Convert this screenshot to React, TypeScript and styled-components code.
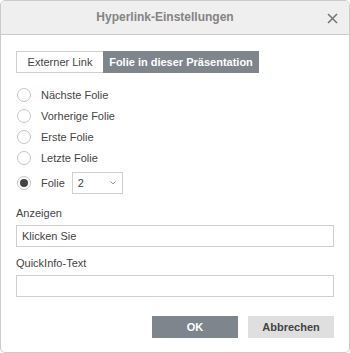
import React from "react";
import styled, { createGlobalStyle } from "styled-components";

const Global = createGlobalStyle`
  html, body { margin: 0; padding: 0; background: #fff; }
  body { font-family: "Liberation Sans", Arial, sans-serif; }
  * { box-sizing: border-box; }
`;

const Dialog = styled.div`
  width: 350px;
  height: 353px;
  border: 1px solid #cbcbcb;
  border-radius: 5px;
  overflow: hidden;
  background: #fff;
  display: flex;
  flex-direction: column;
`;

const Header = styled.div`
  position: relative;
  height: 34px;
  flex: none;
  background: #efefef;
  border-bottom: 1px solid #cbcbcb;
  display: flex;
  align-items: center;
  justify-content: center;
  padding-right: 20px;
  padding-bottom: 1px;
`;

const Title = styled.span`
  font-size: 12px;
  font-weight: bold;
  color: #848484;
`;

const Close = styled.button`
  position: absolute;
  right: 11px;
  top: 11px;
  width: 12px;
  height: 12px;
  padding: 0;
  border: none;
  background: transparent;
  display: flex;
  align-items: center;
  justify-content: center;
  cursor: pointer;
`;

const Body = styled.div`
  padding: 16px 15px 15px 15px;
  display: flex;
  flex-direction: column;
  font-size: 11px;
  color: #444;
`;

const Tabs = styled.div`
  display: flex;
  height: 22px;
`;

const Tab = styled.div<{ $active?: boolean; $w: number }>`
  width: ${(p) => p.$w}px;
  height: 22px;
  display: flex;
  align-items: center;
  justify-content: center;
  font-size: 11px;
  font-weight: ${(p) => (p.$active ? "bold" : "normal")};
  color: ${(p) => (p.$active ? "#fff" : "#444")};
  background: ${(p) => (p.$active ? "#7e858c" : "#fff")};
  border: 1px solid ${(p) => (p.$active ? "#7e858c" : "#cfcfcf")};
  border-right: ${(p) => (p.$active ? "1px solid #7e858c" : "none")};
`;

const RadioList = styled.div`
  display: flex;
  flex-direction: column;
  margin-top: 11px;
`;

const RadioRow = styled.label<{ $tall?: boolean }>`
  display: flex;
  align-items: center;
  height: ${(p) => (p.$tall ? "22px" : "21px")};
  margin-top: ${(p) => (p.$tall ? "4px" : "0")};
  padding-left: 1px;
`;

const Circle = styled.span<{ $checked?: boolean }>`
  width: 14px;
  height: 14px;
  border-radius: 50%;
  border: 1px solid #c4c4c4;
  display: flex;
  align-items: center;
  justify-content: center;
  margin-right: 10px;
  &::after {
    content: "";
    display: ${(p) => (p.$checked ? "block" : "none")};
    width: 8px;
    height: 8px;
    border-radius: 50%;
    background: #444;
  }
`;

const Select = styled.div`
  margin-left: 7px;
  width: 51px;
  height: 22px;
  border: 1px solid #cfcfcf;
  display: flex;
  align-items: center;
  justify-content: space-between;
  padding: 0 6px 0 5px;
  font-size: 11px;
  color: #444;
`;

const FieldLabel = styled.div<{ $top: number }>`
  margin-top: ${(p) => p.$top}px;
  height: 14px;
  line-height: 14px;
  margin-bottom: 5px;
  font-size: 11px;
  color: #444;
`;

const Input = styled.div`
  width: 318px;
  height: 22px;
  border: 1px solid #cfcfcf;
  display: flex;
  align-items: center;
  padding: 0 5px;
  font-size: 11px;
  color: #444;
`;

const Footer = styled.div`
  display: flex;
  justify-content: flex-end;
  gap: 10px;
  margin-top: 19px;
`;

const Button = styled.button<{ $primary?: boolean }>`
  width: 86px;
  height: 22px;
  border: none;
  padding: 0;
  font-family: "Liberation Sans", Arial, sans-serif;
  font-size: 11px;
  font-weight: bold;
  color: ${(p) => (p.$primary ? "#fff" : "#444")};
  background: ${(p) => (p.$primary ? "#7e858c" : "#dfdfdf")};
`;

const Radio = ({ label, checked }: { label: string; checked?: boolean }) => (
  <RadioRow>
    <Circle $checked={checked} />
    {label}
  </RadioRow>
);

export default function App() {
  return (
    <>
      <Global />
      <Dialog>
        <Header>
          <Title>Hyperlink-Einstellungen</Title>
          <Close aria-label="Schließen">
            <svg width="11" height="11" viewBox="0 0 11 11">
              <path d="M1 1 L10 10 M10 1 L1 10" stroke="#777" strokeWidth="1.6" fill="none" />
            </svg>
          </Close>
        </Header>
        <Body>
          <Tabs>
            <Tab $w={87}>Externer Link</Tab>
            <Tab $w={156} $active>
              Folie in dieser Präsentation
            </Tab>
          </Tabs>
          <RadioList>
            <Radio label="Nächste Folie" />
            <Radio label="Vorherige Folie" />
            <Radio label="Erste Folie" />
            <Radio label="Letzte Folie" />
            <RadioRow $tall>
              <Circle $checked />
              Folie
              <Select>
                <span>2</span>
                <svg width="6" height="4" viewBox="0 0 6 4">
                  <path d="M0.5 0.5 L3 3 L5.5 0.5" stroke="#999" strokeWidth="1" fill="none" />
                </svg>
              </Select>
            </RadioRow>
          </RadioList>
          <FieldLabel $top={12}>Anzeigen</FieldLabel>
          <Input>Klicken Sie</Input>
          <FieldLabel $top={9}>QuickInfo-Text</FieldLabel>
          <Input />
          <Footer>
            <Button $primary>OK</Button>
            <Button>Abbrechen</Button>
          </Footer>
        </Body>
      </Dialog>
    </>
  );
}
